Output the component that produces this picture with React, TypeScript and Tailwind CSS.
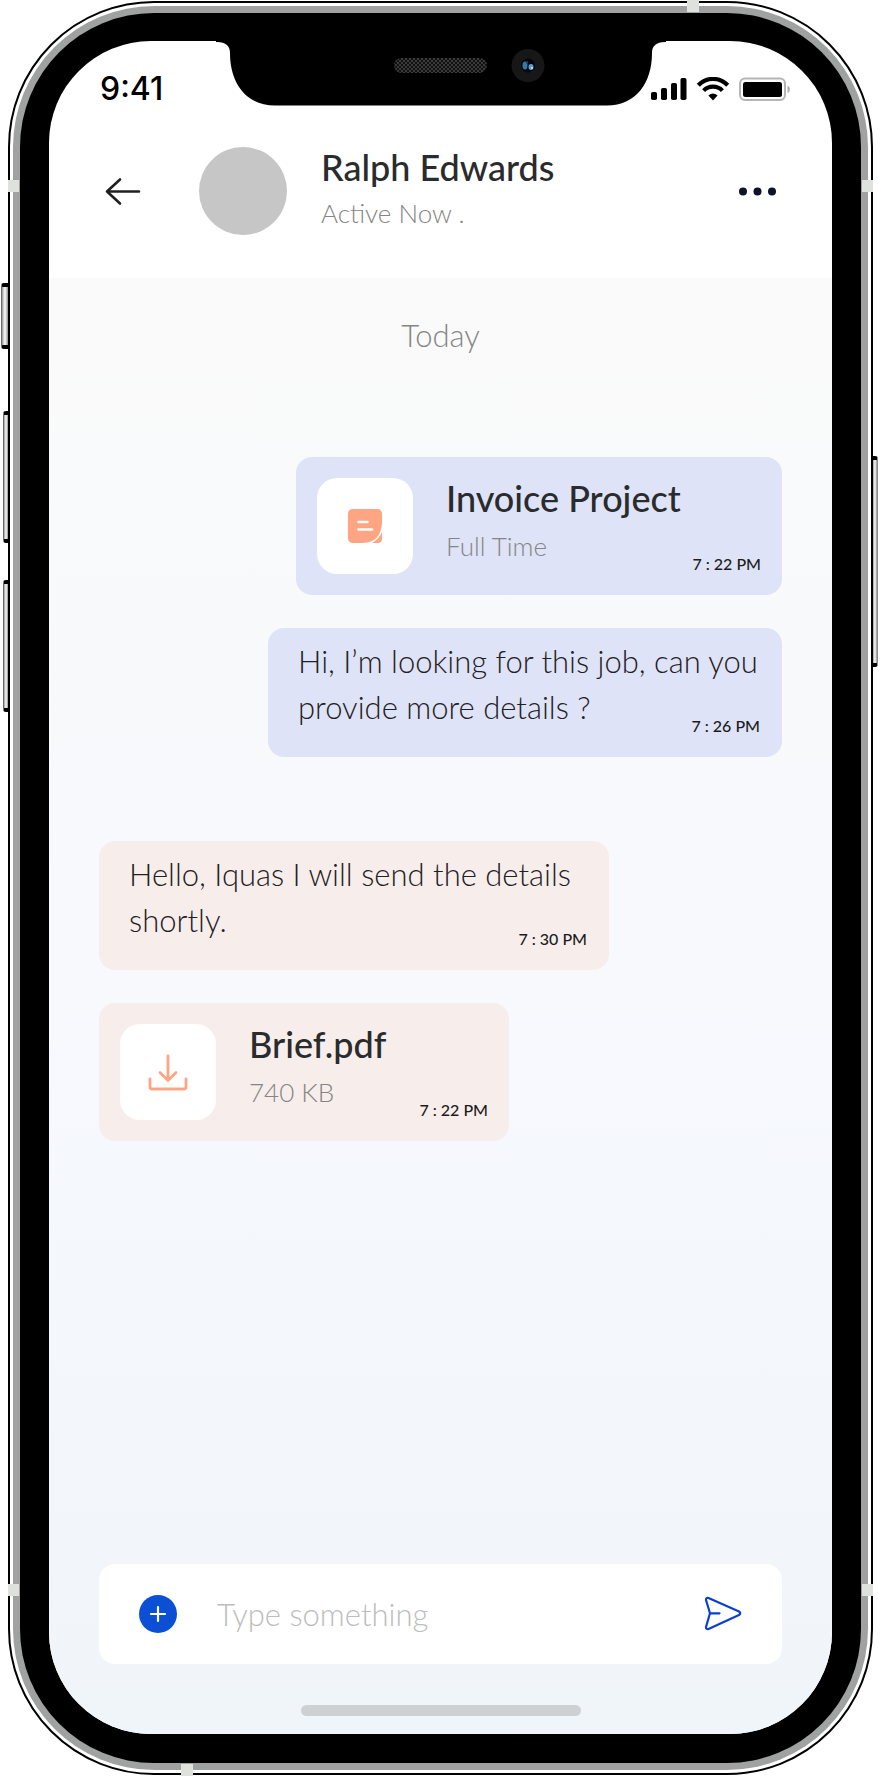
import type { ReactNode } from 'react';

function SideButton({ className, flip = false }: { className: string; flip?: boolean }) {
  return (
    <span
      aria-hidden="true"
      className={`absolute border-y-4 border-black bg-linear-to-r from-[#9a9a9a] via-white to-[#8f8f8f] ${
        flip ? 'rounded-r-[3px] border-r border-r-[#8a8a8a]' : 'rounded-l-[3px] border-l border-l-[#6a6a6a]'
      } ${className}`}
    />
  );
}

function Band({ className }: { className: string }) {
  return <span aria-hidden="true" className={`absolute bg-[#dfe1dc] ${className}`} />;
}

function Notch() {
  return (
    <svg
      aria-hidden="true"
      viewBox="0 0 450 65"
      className="absolute left-1/2 top-0 h-[65px] w-[450px] -translate-x-1/2"
    >
      <defs>
        <pattern id="mesh" width="4" height="4" patternUnits="userSpaceOnUse">
          <rect width="4" height="4" fill="#111" />
          <path d="M0 0L4 4M4 0L0 4" stroke="#454545" strokeWidth="0.8" />
        </pattern>
      </defs>
      <path d="M0 0H450V1H449C440 1 436 5 436 12C436 42 420 64.500 391 64.500H59C30 64.500 14 42 14 12C14 5 10 1 1 1H0Z" fill="#000" />
      <rect x="178" y="17" width="93" height="15" rx="7.500" fill="url(#mesh)" />
      <circle cx="312" cy="24.500" r="16.500" fill="#171717" />
      <circle cx="312" cy="24.500" r="7" fill="#05070b" />
      <ellipse cx="309" cy="24.500" rx="2.500" ry="4" fill="#3a78a8" />
      <ellipse cx="315" cy="26" rx="2.500" ry="3" fill="#5e9ed0" />
      <circle cx="311" cy="21.500" r="1.200" fill="#1e4a70" />
      <circle cx="316" cy="27" r="1" fill="#cfe8ff" />
    </svg>
  );
}

function StatusBar() {
  return (
    <div className="flex h-24 items-center justify-between pl-[51px] pr-[42px]">
      <time className='font-["Inter",sans-serif] text-[32px] leading-9 font-medium text-black'>9:41</time>
      <svg aria-hidden="true" viewBox="0 0 140 24" className="h-6 w-[140px]">
        <g fill="#000">
          <rect x="1" y="15" width="6" height="8" rx="1.800" />
          <rect x="11" y="11" width="6" height="12" rx="1.800" />
          <rect x="21" y="6" width="6" height="17" rx="1.800" />
          <rect x="30.500" y="1" width="6" height="22" rx="1.800" />
          <rect x="93" y="5" width="39" height="15" rx="2.500" />
        </g>
        <g fill="none" stroke="#000" strokeWidth="4.200">
          <path d="M48.300 8.200A20.300 20.300 0 0 1 77.700 8.200" />
          <path d="M53.600 13.600A13.200 13.200 0 0 1 72.400 13.600" />
        </g>
        <path d="M58.400 18.600Q63 14.600 67.600 18.600L63 23.400Z" fill="#000" />
        <rect x="90" y="1.500" width="45" height="21.500" rx="5" fill="none" stroke="#b5b5b5" strokeWidth="2" />
        <path d="M137.500 8.500Q140 9.500 140 12.250Q140 15 137.500 16Z" fill="#b0b0b0" />
      </svg>
    </div>
  );
}

function ChatHeader() {
  return (
    <div className="flex h-[141px] items-start pl-[54px] pr-[49px] pt-[10px]">
      <button type="button" aria-label="Back" className="mt-6 flex h-10 w-10 items-center">
        <svg viewBox="0 0 40 40" className="size-10" fill="none" stroke="#202020" strokeWidth="2.600" strokeLinecap="round" strokeLinejoin="round">
          <path d="M36 20.500H4M17 8.500L4 20.500L17 32.500" />
        </svg>
      </button>
      <div className="ml-14 size-[88px] shrink-0 rounded-full bg-[#c6c6c6]" />
      <div className="ml-[34px] flex-1">
        <h1 className="text-[36px] leading-10 font-medium text-[#2a2b2c]">Ralph Edwards</h1>
        <p className="mt-[10px] text-[26px] leading-8 font-light text-[#858585]">Active Now .</p>
      </div>
      <button type="button" aria-label="More options" className="mt-6 flex h-10 w-[50px] items-center justify-center">
        <svg viewBox="0 0 40 10" className="h-[10px] w-10" fill="#10112a">
          <circle cx="5" cy="5.500" r="4" />
          <circle cx="19.500" cy="5.500" r="4" />
          <circle cx="34" cy="5.500" r="4" />
        </svg>
      </button>
    </div>
  );
}

function NoteIcon() {
  return (
    <svg aria-hidden="true" viewBox="0 0 36 36" className="size-9">
      <path d="M6 1H30Q35 1 35 6V15Q34 34 16 35H6Q1 35 1 30V6Q1 1 6 1Z" fill="#ffa583" />
      <path d="M35 24V31Q35 35 31 35H25Q32 31 35 24Z" fill="#ffa583" />
      <path d="M11.500 14H20.500M11.500 21.500H25" stroke="#fff" strokeWidth="2.600" strokeLinecap="round" />
    </svg>
  );
}

function DownloadIcon() {
  return (
    <svg aria-hidden="true" viewBox="0 0 40 38" className="h-[38px] w-10" fill="none" stroke="#ffa583" strokeWidth="2.800" strokeLinecap="round" strokeLinejoin="round">
      <path d="M20 3V27M12 19.500L20 27.500L28 19.500M2 26V34Q2 36 4 36H36Q38 36 38 34V26" />
    </svg>
  );
}

interface FileCardProps {
  title: string;
  detail: string;
  time: string;
  icon: ReactNode;
  className: string;
}

function FileCard({ title, detail, time, icon, className }: FileCardProps) {
  return (
    <article className={`flex h-[138px] max-w-full rounded-[16px] p-[21px] ${className}`}>
      <div className="flex size-24 shrink-0 items-center justify-center rounded-[20px] bg-white">{icon}</div>
      <div className="ml-[33px] flex-1">
        <h2 className="text-[36px] leading-10 font-medium whitespace-nowrap text-[#2a2b2c]">{title}</h2>
        <p className="mt-3 text-[26px] leading-8 font-light text-[#858585]">{detail}</p>
      </div>
      <time className="self-end text-[16px] leading-5 font-medium whitespace-nowrap text-[#1c1c1c]">{time}</time>
    </article>
  );
}

function TextMessage({ text, time, className }: { text: string; time: string; className: string }) {
  return (
    <article className={`flex h-[129px] max-w-full flex-col rounded-[16px] pt-[10px] pl-[30px] ${className}`}>
      <p className="text-[31px] leading-[46px] font-light text-[#1f2022]">{text}</p>
      <time className="-mt-[14px] mr-[22px] self-end text-[16px] leading-5 font-medium text-[#1c1c1c]">{time}</time>
    </article>
  );
}

function Composer() {
  return (
    <form
      onSubmit={(e) => e.preventDefault()}
      className="mx-[50px] flex h-[100px] items-center rounded-[16px] bg-white pl-10 pr-10"
    >
      <button type="button" aria-label="Add attachment" className="flex size-[38px] shrink-0 items-center justify-center rounded-full bg-[#0b4fd4]">
        <svg viewBox="0 0 20 20" className="size-5" stroke="#fff" strokeWidth="2.200" strokeLinecap="round">
          <path d="M10 3V17M3 10H17" />
        </svg>
      </button>
      <input
        type="text"
        aria-label="Message"
        placeholder="Type something"
        className="ml-10 min-w-0 flex-1 bg-transparent text-[31px] leading-10 font-light text-[#1f2022] outline-none placeholder:text-[#bdbdbd]"
      />
      <button type="submit" aria-label="Send" className="shrink-0">
        <svg viewBox="0 0 38 38" className="size-[38px]" fill="none" stroke="#0a3fd0" strokeWidth="2.200" strokeLinecap="round" strokeLinejoin="round">
          <path d="M4.500 3L35 16.500Q37.500 18.300 35 20L4.500 34Q1.800 34.500 2 32L6 18.300L2 5Q1.800 2.500 4.500 3ZM6 18.300H15.500" />
        </svg>
      </button>
    </form>
  );
}

export default function App() {
  return (
    <div className="relative flex min-h-screen w-full bg-white py-px pl-2 pr-[7px]">
      <SideButton className="left-px top-[283px] h-[66px] w-[7px]" />
      <SideButton className="left-[3px] top-[411px] h-[132px] w-[5px]" />
      <SideButton className="left-[3px] top-[580px] h-[132px] w-[5px]" />
      <SideButton flip className="right-[2px] top-[456px] h-[211px] w-[5px]" />

      <div className="flex flex-1 rounded-[146px] border-2 border-black bg-white p-[3px]">
        <div className="flex flex-1 rounded-[141px] bg-[#a0a2a2] p-[7px]">
          <div className="flex flex-1 rounded-[134px] bg-black px-[29px] pt-7 pb-[29px]">
            <div className='relative flex flex-1 flex-col overflow-hidden rounded-[102px] bg-white font-["Lato",sans-serif]'>
              <header>
                <Notch />
                <StatusBar />
                <ChatHeader />
              </header>

              <main className="flex flex-1 flex-col bg-linear-to-b from-[#fafafa] via-[#f7f9fd] to-[#f0f5fa]">
                <p className="mt-[37px] text-center text-[31px] leading-10 font-light text-[#858585]">Today</p>

                <section aria-label="Messages" className="mt-[102px] flex flex-1 flex-col px-[50px]">
                  <FileCard className="w-[486px] self-end bg-[#dee3f7]" title="Invoice Project" detail="Full Time" time="7 : 22 PM" icon={<NoteIcon />} />
                  <TextMessage className="mt-[33px] w-[514px] self-end bg-[#dee3f7]" text="Hi, I’m looking for this job, can you provide more details ?" time="7 : 26 PM" />
                  <TextMessage className="mt-[84px] w-[510px] self-start bg-[#f7eeec]" text="Hello, Iquas I will send the details shortly." time="7 : 30 PM" />
                  <FileCard className="mt-[33px] w-[410px] self-start bg-[#f7eeec]" title="Brief.pdf" detail="740 KB" time="7 : 22 PM" icon={<DownloadIcon />} />
                </section>

                <Composer />
                <div className="mx-auto mt-[41px] mb-[18px] h-[11px] w-[280px] rounded-full bg-[#ced1d4]" />
              </main>
            </div>
          </div>
        </div>
      </div>

      <Band className="left-2 top-[180px] h-3 w-[11px]" />
      <Band className="right-[7px] top-[180px] h-3 w-[11px]" />
      <Band className="bottom-[180px] left-2 h-3 w-[11px]" />
      <Band className="right-[7px] bottom-[180px] h-3 w-[11px]" />
      <Band className="right-[181px] top-0 h-3 w-3" />
      <Band className="bottom-0 left-[181px] h-3 w-3" />
    </div>
  );
}
